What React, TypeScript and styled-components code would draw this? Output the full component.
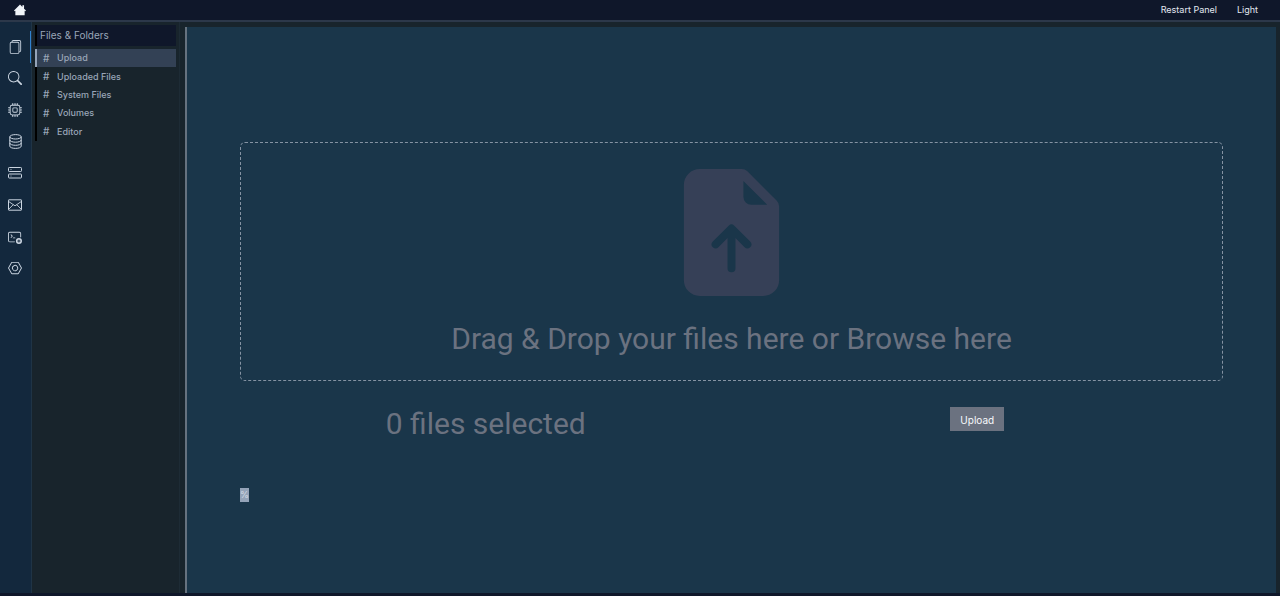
import React from 'react';
import styled, { createGlobalStyle } from 'styled-components';
import {
  BsCpu,
  BsFileEarmarkArrowUpFill,
  BsFiles,
  BsNut,
  BsSearch,
  BsTerminalPlus,
} from 'react-icons/bs';

const GlobalStyle = createGlobalStyle`
  * { box-sizing: border-box; }
  body {
    margin: 0;
    background: #0f172a;
    color: #9aa6b8;
    font-family: Inter, "Liberation Sans", sans-serif;
    font-size: 9px;
  }
  button { font: inherit; border: 0; margin: 0; cursor: pointer; }
  a { color: inherit; text-decoration: none; }
`;

const Page = styled.div`
  min-height: 100vh;
  display: flex;
  flex-direction: column;
  padding-bottom: 3px;
`;

const TopBar = styled.header`
  height: 22px;
  display: flex;
  align-items: center;
  justify-content: space-between;
  padding: 0 22px 1px 14px;
  border-bottom: 2px solid #2c384a;
  background: #0f172a;
`;

const HomeLink = styled.a`
  display: flex;
  color: #f1f5f9;
  font-size: 12px;
`;

const TopActions = styled.nav`
  display: flex;
  gap: 20px;
`;

const TopButton = styled.button`
  padding: 0;
  background: none;
  color: #e2e8f0;
`;

const Body = styled.div`
  flex: 1;
  display: flex;
  background: #18242c;
`;

const Rail = styled.nav`
  width: 32px;
  padding-top: 9px;
  border-right: 1px solid #1f3446;
  background: #13283d;
`;

const RailList = styled.div`
  height: 253px;
  display: grid;
  grid-auto-rows: 1fr;
`;

const RailLink = styled.a<{ $active?: boolean }>`
  display: flex;
  align-items: center;
  justify-content: center;
  border-right: 1px solid ${(p) => (p.$active ? '#3182ce' : 'transparent')};
  color: #cbd5e1;
  font-size: 14px;
`;

const SidePanel = styled.aside`
  width: 148px;
  padding: 3px 3px 0 3px;
  border-right: 1px solid #1d2b35;
`;

const PanelTitle = styled.h2`
  height: 21px;
  margin: 0 0 3px;
  padding-left: 3px;
  border-left: 2px solid #000;
  background: #0f172a;
  font-size: 10px;
  font-weight: 400;
  line-height: 21px;
`;

const PanelList = styled.nav`
  height: 92px;
  display: grid;
  grid-auto-rows: 1fr;
`;

const PanelLink = styled.a<{ $active?: boolean }>`
  display: flex;
  align-items: center;
  border-left: 2px solid ${(p) => (p.$active ? '#94a3b8' : '#000')};
  padding: 0 0 1px 6px;
  background: ${(p) => (p.$active ? '#334155' : 'transparent')};
  font-weight: 500;
`;

const Hash = styled.span`
  width: 14px;
  font-size: 10px;
`;

const Main = styled.main`
  flex: 1;
  margin: 5px 4px 0 5px;
  padding: 115px 53px 0;
  border-left: 2px solid #66727f;
  background: #1a364a;
`;

const DropZone = styled.section`
  height: 239px;
  display: flex;
  flex-direction: column;
  align-items: center;
  padding-top: 26px;
  border: 1px dashed #8593a3;
  border-radius: 5px;
`;

const FileGlyph = styled(BsFileEarmarkArrowUpFill)`
  font-size: 127px;
  color: #364057;
`;

const LargeText = styled.p`
  margin: 0;
  color: #6b7280;
  font-family: Roboto, "Liberation Sans", sans-serif;
  font-size: 30px;
  line-height: 34px;
`;

const DropText = styled(LargeText)`
  margin-top: 26px;
`;

const Summary = styled.section`
  display: grid;
  grid-template-columns: 1fr 1fr;
  justify-items: center;
  align-items: start;
  padding-top: 26px;
`;

const UploadButton = styled.button`
  height: 24px;
  padding: 2px 10px 0;
  background: #6b7280;
  color: #f8fafc;
  font-size: 10px;
`;

const Progress = styled.div`
  display: flex;
  padding-top: 47px;
`;

const ProgressValue = styled.span`
  background: #94a3b8;
  color: #d3dae4;
  font-size: 9px;
  line-height: 14px;
`;

const HomeIcon = () => (
  <svg width="1em" height="1em" viewBox="0 0 16 16" fill="currentColor">
    <path d="M8 .8 11.2 4V1.6h2.2v4.6L16 8.8l-.9.9-.9-.8V15H1.8V8.900l-.9.8L0 8.800z" />
  </svg>
);

const DatabaseIcon = () => (
  <svg width="13" height="15" viewBox="0 0 13 15" fill="none" stroke="currentColor">
    <ellipse cx="6.500" cy="2.800" rx="5.700" ry="2.200" />
    <path d="M.8 2.800v9.400c0 1.200 2.500 2.200 5.700 2.200s5.700-1 5.700-2.200V2.800" />
    <path d="M.8 6c0 1.200 2.500 2.200 5.700 2.200S12.200 7.200 12.200 6" />
    <path d="M.8 9.100c0 1.200 2.500 2.200 5.700 2.200s5.700-1 5.700-2.200" />
  </svg>
);

const ServerIcon = () => (
  <svg width="14" height="12" viewBox="0 0 14 12" fill="none" stroke="currentColor">
    <rect x=".5" y=".5" width="13" height="4" rx=".8" />
    <rect x=".5" y="7" width="13" height="4" rx=".8" />
    <path d="M2.500 2.500h1M2.500 9h1" strokeWidth=".8" />
  </svg>
);

const MailIcon = () => (
  <svg width="14" height="12" viewBox="0 0 14 12" fill="none" stroke="currentColor">
    <rect x=".5" y=".8" width="13" height="10.400" rx=".4" />
    <path d="M.8 2.600 7 6.800l6.200-4.200M.8 10.200l4.400-4.500M13.200 10.200 8.800 5.700" strokeWidth=".9" />
  </svg>
);

const sections = [
  { label: 'Files', Icon: BsFiles },
  { label: 'Search', Icon: BsSearch },
  { label: 'Processor', Icon: BsCpu },
  { label: 'Database', Icon: DatabaseIcon },
  { label: 'Servers', Icon: ServerIcon },
  { label: 'Mail', Icon: MailIcon },
  { label: 'Terminal', Icon: BsTerminalPlus },
  { label: 'Settings', Icon: BsNut },
];

const folders = ['Upload', 'Uploaded Files', 'System Files', 'Volumes', 'Editor'];

export default function App() {
  return (
    <>
      <GlobalStyle />
      <Page>
        <TopBar>
          <HomeLink href="#home" aria-label="Home">
            <HomeIcon />
          </HomeLink>
          <TopActions>
            <TopButton type="button">Restart Panel</TopButton>
            <TopButton type="button">Light</TopButton>
          </TopActions>
        </TopBar>
        <Body>
          <Rail>
            <RailList>
              {sections.map(({ label, Icon }, i) => (
                <RailLink key={label} href="#section" aria-label={label} $active={i === 0}>
                  <Icon />
                </RailLink>
              ))}
            </RailList>
          </Rail>
          <SidePanel>
            <PanelTitle>Files &amp; Folders</PanelTitle>
            <PanelList>
              {folders.map((name, i) => (
                <PanelLink key={name} href="#folder" $active={i === 0}>
                  <Hash>#</Hash>
                  {name}
                </PanelLink>
              ))}
            </PanelList>
          </SidePanel>
          <Main>
            <DropZone>
              <FileGlyph />
              <DropText>Drag &amp; Drop your files here or Browse here</DropText>
            </DropZone>
            <Summary>
              <LargeText>0 files selected</LargeText>
              <UploadButton type="button">Upload</UploadButton>
            </Summary>
            <Progress>
              <ProgressValue>%</ProgressValue>
            </Progress>
          </Main>
        </Body>
      </Page>
    </>
  );
}
